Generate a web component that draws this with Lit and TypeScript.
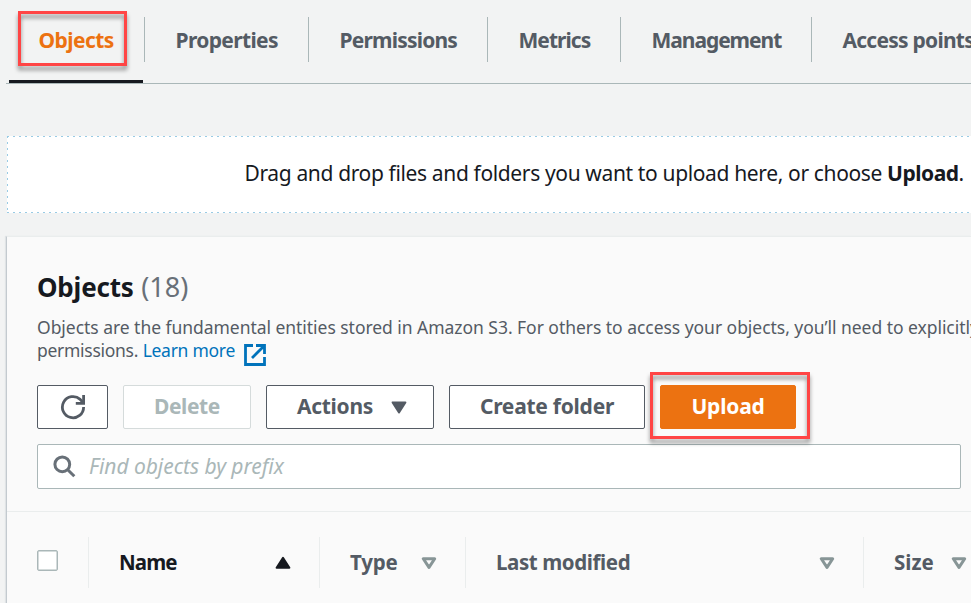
import { LitElement, html, css, svg } from "lit";
import { customElement, property } from "lit/decorators.js";

@customElement("sort-icon")
class SortIcon extends LitElement {
  @property() kind = "none";
  static styles = css`
    :host { display: block; width: 16px; height: 13px; flex: none; }
    svg { display: block; }
    .solid { fill: #16191f; stroke: #16191f; }
    .hollow { fill: none; stroke: #879596; }
    .menu { fill: #545b64; stroke: #545b64; }
  `;
  render() {
    const shape =
      this.kind === "asc"
        ? svg`<path class="solid" d="M8 1.9 14.4 11.7H1.6Z" stroke-width="2" stroke-linejoin="round"/>`
        : this.kind === "menu"
          ? svg`<path class="menu" d="M1.6 1.4H14.4L8 11.4Z" stroke-width="2" stroke-linejoin="round"/>`
          : svg`<path class="hollow" d="M2.3 2.7H13.7L8 11.4Z" stroke-width="3" stroke-linejoin="round"/>`;
    return html`<svg width="16" height="13" viewBox="0 0 16 13">${shape}</svg>`;
  }
}

@customElement("app-root")
class AppRoot extends LitElement {
  static styles = css`
    :host {
      display: block; width: 971px; height: 603px; overflow: hidden;
      background: #f2f3f3; color: #16191f;
      font-family: "Noto Sans", "Open Sans", sans-serif; font-size: 21px;
      white-space: nowrap;
    }
    * { box-sizing: border-box; }
    .page { width: 971px; height: 603px; overflow: hidden; padding-left: 6px; }
    .tabs { display: flex; height: 84px; border-bottom: 1px solid #aab7b8; padding-left: 3px; margin-bottom: 52px; }
    .tab { position: relative; flex: none; height: 83px; padding: 17px 0 0; color: #545b64; font-weight: 700; }
    .tab span { display: block; height: 45px; line-height: 47px; border-left: 1px solid #aab7b8; padding-left: 30.5px; }
    .tab:first-child span { border: 0; padding-left: 29.5px; }
    .tab.objects { width: 135px; color: #ec7211; letter-spacing: -0.55px; }
    .tab.objects::before { content: ""; position: absolute; left: 0; bottom: 0; width: 134px; height: 3px; background: #16191f; }
    .tab.properties { width: 164px; letter-spacing: -0.65px; }
    .tab.permissions { width: 179px; letter-spacing: -0.8px; }
    .tab.metrics { width: 133px; letter-spacing: -0.95px; }
    .tab.management { width: 191px; letter-spacing: -1.05px; }
    .tab.access { width: 200px; letter-spacing: -0.75px; }
    .mark { position: absolute; border: 3px solid #ff4545; filter: drop-shadow(0 4px 2px rgba(0, 0, 0, 0.42)); pointer-events: none; }
    .mark.tabmark { left: 9px; top: 11px; width: 109px; height: 55px; }
    .mark.uploadmark { left: -11px; top: -14px; width: 160px; height: 67px; }

    .drop { margin-left: 1px; height: 77px; padding: 1px 0 1px 1px; background:
      repeating-linear-gradient(90deg, #99cbe4 0 2px, #fff 2px 6px) top / 100% 1px no-repeat,
      repeating-linear-gradient(90deg, #99cbe4 0 2px, #fff 2px 6px) bottom / 100% 1px no-repeat,
      repeating-linear-gradient(180deg, #99cbe4 0 2px, #fff 2px 6px) left / 1px 100% no-repeat, #fff;
      margin-bottom: 23px; }
    .drop p { margin: 0; padding-left: 236.5px; line-height: 73px; letter-spacing: -0.36px; }
    .drop b { letter-spacing: -0.5px; }

    .panel { height: 400px; background: #fafafa; border-left: 1px solid #c3cacf; border-top: 1px solid #eaeded; box-shadow: -1px 0 1px #e0e3e5; padding-top: 31px; }
    .head { padding-left: 30px; height: 244px; border-bottom: 1px solid #eaeded; }
    h2 { margin: 0; font-size: 26px; line-height: 37px; height: 48px; letter-spacing: -0.2px; }
    h2 span { font-weight: 400; color: #687078; letter-spacing: 0; font-size: 27px; margin-left: 1px; }
    .desc { font-size: 17.5px; line-height: 23px; height: 69px; color: #545b64; letter-spacing: -0.04px; }
    .desc div { display: flex; }
    .desc .second { letter-spacing: -0.28px; }
    .desc a { color: #0073bb; margin-left: 4.5px; }
    .desc svg { margin: 5px 0 0 8.5px; }
    .actions { display: flex; gap: 15px; height: 59px; }
    .btn { position: relative; height: 44px; border: 1px solid #545b64; border-radius: 2px; background: #fff; color: #545b64;
      font-weight: 700; display: flex; align-items: center; justify-content: center; line-height: 41px; }
    .btn span { display: block; height: 42px; }
    .refresh { width: 71px; }
    .delete { width: 128px; color: #aab7b8; border-color: #d5dbdb; letter-spacing: -0.4px; }
    .menu { width: 168px; gap: 18px; letter-spacing: -0.3px; justify-content: flex-start; padding-left: 30px; }
    .create { width: 196px; letter-spacing: -0.25px; }
    .upload { width: 136px; background: #ec7211; border-color: #ec7211; color: #fff; letter-spacing: -0.2px; }
    .search { display: flex; align-items: center; width: 924px; height: 45px; border: 1px solid #aab7b8; border-radius: 2px; background: #fff; padding-left: 15px; }
    .search em { color: #aab7b8; margin-left: 13px; line-height: 42px; height: 43px; letter-spacing: -0.05px; }

    .cols { display: flex; padding-top: 25px; height: 90px; font-weight: 700; font-size: 20.5px; color: #545b64; letter-spacing: -0.4px; }
    .col { flex: none; height: 51px; border-left: 1px solid #eaeded; padding: 0 28px 0 30px; display: flex; align-items: center; justify-content: space-between; }
    .col span { display: block; height: 51px; line-height: 50px; }
    .col.check { width: 81px; border: 0; align-items: flex-start; padding: 13px 0 0 30px; justify-content: flex-start; }
    .box { width: 21px; height: 21px; border: 1px solid #aab7b8; box-shadow: inset 0 0 0 0.5px #aab7b8; border-radius: 2px; background: #fff; }
    .name { width: 231px; color: #16191f; letter-spacing: -0.9px; }
    .type { width: 146px; letter-spacing: -0.2px; }
    .modified { width: 398px; }
    .size { width: 132px; letter-spacing: 0; }
  `;

  render() {
    const tabs = [
      ["objects", "Objects"],
      ["properties", "Properties"],
      ["permissions", "Permissions"],
      ["metrics", "Metrics"],
      ["management", "Management"],
      ["access", "Access points"],
    ];
    const cols = [
      ["name", "Name", "asc"],
      ["type", "Type", "none"],
      ["modified", "Last modified", "none"],
      ["size", "Size", "none"],
    ];
    return html`<div class="page">
      <nav class="tabs">
        ${tabs.map(
          ([id, label], i) => html`<div class="tab ${id}"><span>${label}</span>${i === 0 ? html`<i class="mark tabmark"></i>` : ""}</div>`
        )}
      </nav>
      <div class="drop"><p>Drag and drop files and folders you want to upload here, or choose <b>Upload</b>.</p></div>
      <section class="panel">
        <div class="head">
          <h2>Objects <span>(18)</span></h2>
          <div class="desc">
            <div>Objects are the fundamental entities stored in Amazon S3. For others to access your objects, you’ll need to explicitly</div>
            <div class="second">
              permissions. <a>Learn more</a>
              <svg width="22" height="22" viewBox="0 0 22 22" fill="none" stroke="#0073bb" stroke-width="2.8">
                <path d="M9 1.5H1.5V20.5H20.5V13" />
                <path d="M12 1.5H20.5V10M20 2 8 14" />
              </svg>
            </div>
          </div>
          <div class="actions">
            <div class="btn refresh">
              <svg width="26" height="26" viewBox="0 0 26 26" fill="none" stroke="#545b64" stroke-width="2.8">
                <path d="M23.6 13A10.6 10.6 0 1 1 20.2 5.4L23.4 9" />
                <path d="M23.6 1V9.3H15.8" />
              </svg>
            </div>
            <div class="btn delete"><span>Delete</span></div>
            <div class="btn menu"><span>Actions</span><sort-icon kind="menu"></sort-icon></div>
            <div class="btn create"><span>Create folder</span></div>
            <div class="btn upload"><span>Upload</span><i class="mark uploadmark"></i></div>
          </div>
          <div class="search">
            <svg width="23" height="23" viewBox="0 0 23 23" fill="none" stroke="#687078" stroke-width="3">
              <circle cx="9.3" cy="9.3" r="7.4" />
              <path d="M14.5 14.5 21.3 21.3" />
            </svg>
            <em>Find objects by prefix</em>
          </div>
        </div>
        <div class="cols">
          <div class="col check"><div class="box"></div></div>
          ${cols.map(([id, label, kind]) => html`<div class="col ${id}"><span>${label}</span><sort-icon kind=${kind}></sort-icon></div>`)}
        </div>
      </section>
    </div>`;
  }
}
